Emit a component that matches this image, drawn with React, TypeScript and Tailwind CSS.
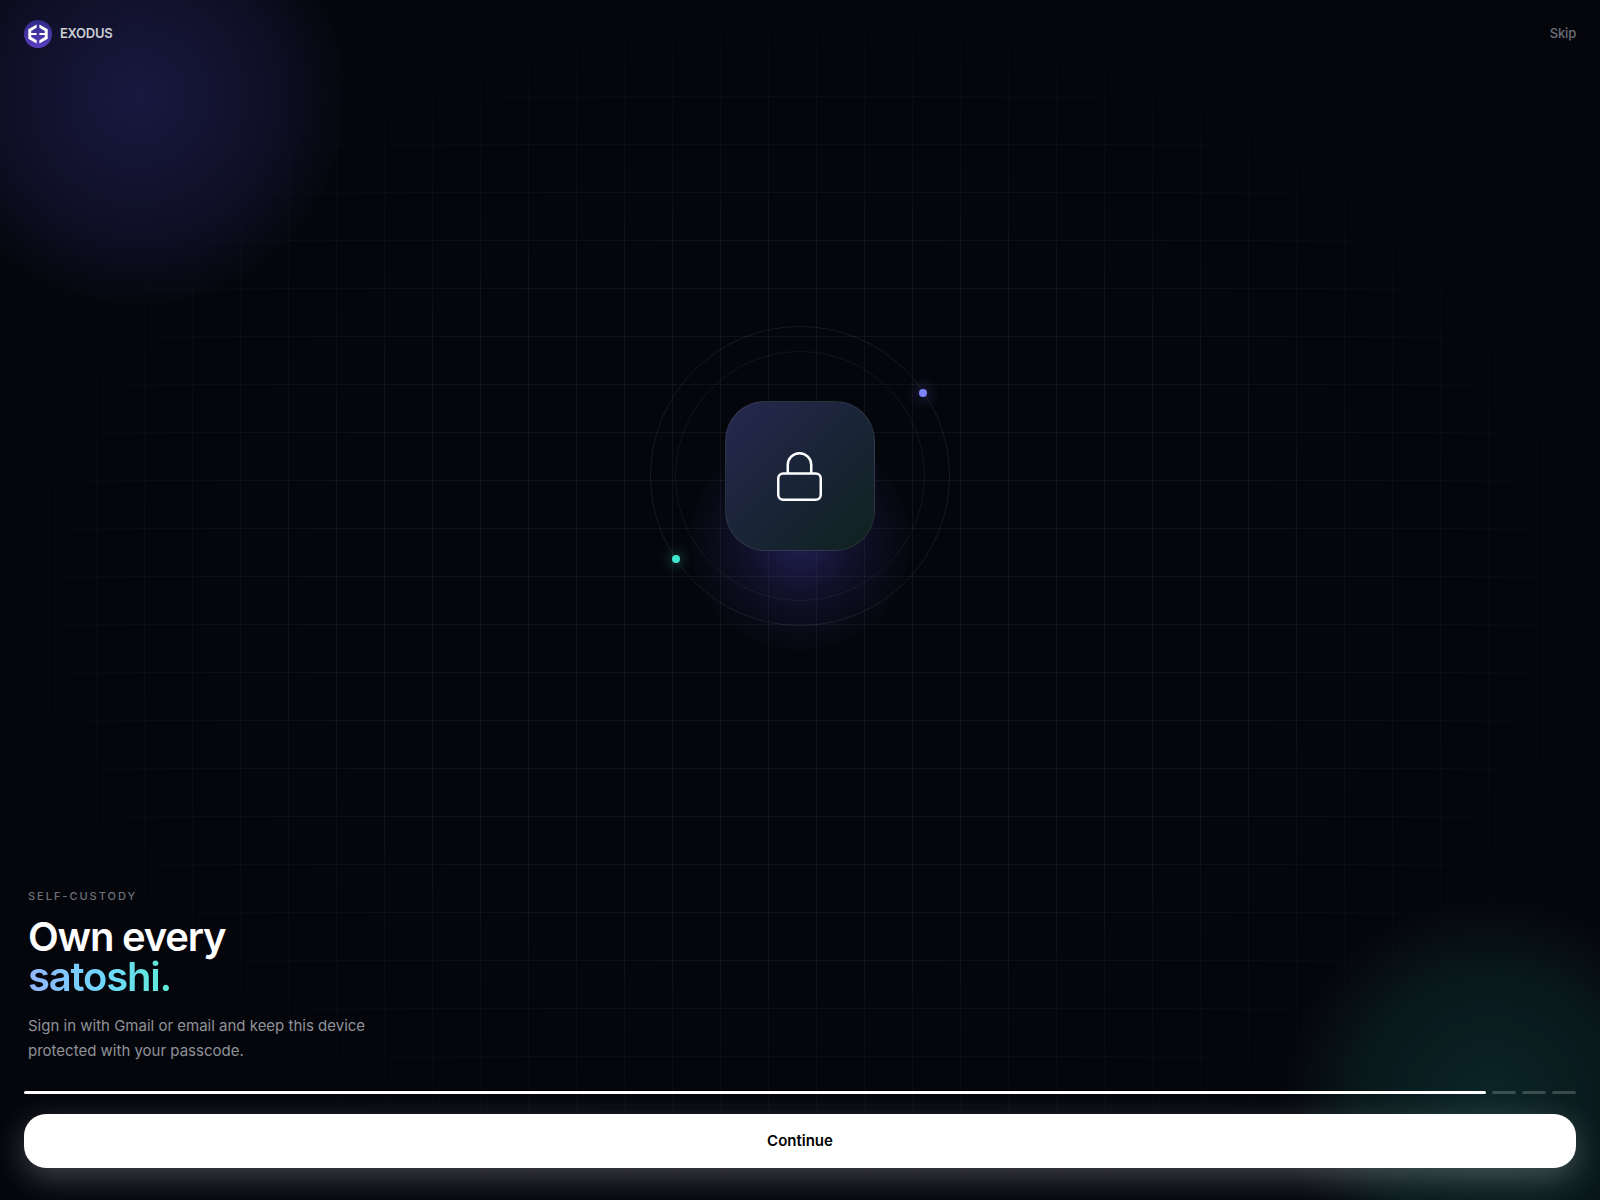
export default function App() {
  return (
    <div className="relative flex h-[1200px] w-full flex-col overflow-hidden bg-[#05060c] font-['Inter',sans-serif] text-white">
      <div className="absolute inset-0 bg-[linear-gradient(rgba(255,255,255,0.05)_1px,transparent_1px),linear-gradient(90deg,rgba(255,255,255,0.05)_1px,transparent_1px)] bg-[size:48px_48px] [mask-image:radial-gradient(ellipse_at_center,black_40%,transparent_78%)]" />
      <div className="absolute left-[-77px] top-[-118px] h-[430px] w-[430px] rounded-full bg-[radial-gradient(circle,rgba(31,31,82,0.74)_0%,rgba(31,31,82,0.36)_45%,transparent_70%)]" />
      <div className="absolute left-[1280px] top-[895px] h-[420px] w-[420px] rounded-full bg-[radial-gradient(circle,rgba(20,85,78,0.4)_0%,rgba(20,85,78,0.22)_45%,transparent_70%)]" />

      <header className="relative flex h-[68px] items-center justify-between px-6">
        <div className="flex items-center gap-2">
          <svg width="28" height="28" viewBox="0 0 28 28">
            <defs>
              <linearGradient id="logo" x1="0" y1="0" x2="0" y2="1">
                <stop offset="0" stopColor="#2f2a86" />
                <stop offset="1" stopColor="#5a3fc0" />
              </linearGradient>
            </defs>
            <circle cx="14" cy="14" r="14" fill="url(#logo)" />
            <path d="M12.6 4.5 L4.3 9.3 L4.3 18.7 L12.6 23.5 L12.6 20.2 L7.2 17 L7.2 15.1 L12.6 15.1 L12.6 12.9 L7.2 12.9 L7.2 11 L12.6 7.8 Z" fill="#fff" />
            <path d="M15.4 4.5 L23.7 9.3 L23.7 18.7 L15.4 23.5 L15.4 20.2 L20.8 17 L20.8 15.1 L15.4 15.1 L15.4 12.9 L20.8 12.9 L20.8 11 L15.4 7.8 Z" fill="#fff" />
          </svg>
          <span className="text-[13px] font-semibold tracking-[-0.02em] text-[#cbced3]">EXODUS</span>
        </div>
        <span className="text-[13px] font-medium tracking-[-0.015em] text-[#6b7078]">Skip</span>
      </header>

      <main className="relative flex flex-1 flex-col">
        <div className="relative h-[820px]">
          <div className="absolute left-[685px] top-[358px] h-[230px] w-[230px] rounded-full bg-[radial-gradient(circle,rgba(60,55,150,0.5)_0%,rgba(60,55,150,0.2)_35%,transparent_70%)]" />
          <div className="absolute left-[650px] top-[258px] h-[300px] w-[300px] rounded-full border border-white/[0.08]" />
          <div className="absolute left-[675px] top-[283px] h-[250px] w-[250px] rounded-full border border-white/[0.05]" />
          <div className="absolute left-[919px] top-[321px] h-2 w-2 rounded-full bg-[#7c83ff] shadow-[0_0_14px_rgba(124,131,255,0.7)]" />
          <div className="absolute left-[672px] top-[487px] h-2 w-2 rounded-full bg-[#3ee6cf] shadow-[0_0_14px_rgba(62,230,207,0.7)]" />
          <div className="absolute left-[725px] top-[333px] flex h-[150px] w-[150px] items-center justify-center rounded-[40px] border border-white/[0.08] bg-[linear-gradient(135deg,#25284f,#0f211f)]">
            <svg className="mr-px" width="45" height="49" viewBox="0 0 45 49" fill="none" stroke="#fff" strokeWidth="2.5" strokeLinejoin="round">
              <path d="M10.75 21 V13 a11.75 11.75 0 0 1 23.5 0 V21" />
              <rect x="1.25" y="21.5" width="42.5" height="26.25" rx="5" />
            </svg>
          </div>
        </div>

        <section className="relative px-7">
          <p className="text-[11px] font-medium leading-[16px] tracking-[0.18em] text-[#6e7178]">SELF-CUSTODY</p>
          <h1 className="mt-[13px] text-[40px] font-semibold leading-[40px] tracking-[-0.03em]">
            Own every
            <br />
            <span className="bg-[linear-gradient(90deg,#93b5fb,#6fd6ff_50%,#5eead4)] bg-clip-text text-transparent">satoshi.</span>
          </h1>
          <p className="mt-[16px] text-[15px] leading-[25px] text-[#8f9298]">
            Sign in with Gmail or email and keep this device
            <br />
            protected with your passcode.
          </p>
        </section>

        <div className="relative mt-[28px] flex gap-[6px] px-6">
          <div className="h-[3px] flex-1 rounded-full bg-white" />
          <div className="h-[3px] w-6 rounded-full bg-white/20" />
          <div className="h-[3px] w-6 rounded-full bg-white/20" />
          <div className="h-[3px] w-6 rounded-full bg-white/20" />
        </div>

        <div className="relative px-6 pb-8 pt-5">
          <button className="h-[54px] w-full rounded-[22px] bg-white text-[15px] font-semibold text-black shadow-[0_10px_32px_rgba(255,255,255,0.24)]">
            Continue
          </button>
        </div>
      </main>
    </div>
  );
}
